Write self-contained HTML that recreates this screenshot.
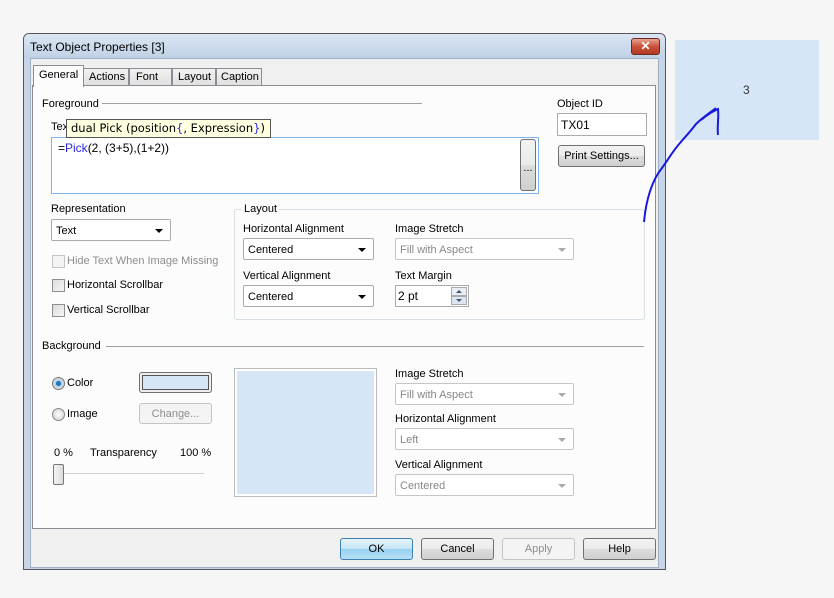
<!DOCTYPE html>
<html><head><style>
*{margin:0;padding:0;box-sizing:border-box}
body{width:834px;height:598px;background:#f6f6f6;font-family:"Liberation Sans",sans-serif;font-size:11px;color:#000;position:relative;overflow:hidden}
.a{position:absolute}
.t{position:absolute;white-space:nowrap}
.combo{position:absolute;background:#fff;border:1px solid #ababab;border-radius:2px;padding:5px 0 0 4px;height:22px}
.combo:after{content:"";position:absolute;right:7px;top:9px;border-left:4px solid transparent;border-right:4px solid transparent;border-top:4px solid #000}
.dis{color:#888;border-color:#c6c6c6}
.dis:after{border-top-color:#aaa}
.btn{position:absolute;border:1px solid #707070;border-radius:3px;background:linear-gradient(#f2f2f2,#ebebeb 50%,#dddddd 51%,#cfcfcf);text-align:center;height:21px;padding-top:4px}
.chk{position:absolute;width:13px;height:13px;border:1px solid #8e8f8f;background:linear-gradient(135deg,#dcdcdc,#f5f5f5)}
.line{position:absolute;height:1px;background:#a0a0a0}
</style></head><body>
<div class="a" style="left:23px;top:33px;width:643px;height:537px;background:#c6d6e8;border:1px solid #555;border-radius:6px 6px 0 0"></div>
<div class="a" style="left:24px;top:34px;width:641px;height:24px;background:linear-gradient(#dbe6f3,#c0d2e6);border-radius:5px 5px 0 0"></div>
<div class="t" style="left:30px;top:40px;font-size:12px">Text Object Properties [3]</div>
<div class="a" style="left:631px;top:38px;width:29px;height:17px;border:1px solid #6a2a20;border-radius:3px;background:linear-gradient(#e8a593,#c8513a 50%,#b13a24);color:#fff;font-weight:bold;text-align:center;font-size:12px;line-height:15px">✕</div>
<div class="a" style="left:30px;top:58px;width:629px;height:510px;background:#f0f0f0;border:1px solid #a0b0c4"></div>
<div class="a" style="left:32px;top:85px;width:624px;height:444px;background:#fcfcfc;border:1px solid #898c95"></div>
<div class="a" style="left:83px;top:68px;width:46px;height:18px;border:1px solid #898c95;background:linear-gradient(#f2f2f2,#e0e0e0)"></div>
<div class="a" style="left:129px;top:68px;width:43px;height:18px;border:1px solid #898c95;background:linear-gradient(#f2f2f2,#e0e0e0)"></div>
<div class="a" style="left:172px;top:68px;width:44px;height:18px;border:1px solid #898c95;background:linear-gradient(#f2f2f2,#e0e0e0)"></div>
<div class="a" style="left:216px;top:68px;width:46px;height:18px;border:1px solid #898c95;background:linear-gradient(#f2f2f2,#e0e0e0)"></div>
<div class="a" style="left:33px;top:65px;width:51px;height:22px;border:1px solid #898c95;border-bottom:none;background:#fcfcfc"></div>
<div class="t" style="left:39px;top:69px">General</div>
<div class="t" style="left:89px;top:71px">Actions</div>
<div class="t" style="left:136px;top:71px">Font</div>
<div class="t" style="left:178px;top:71px">Layout</div>
<div class="t" style="left:221px;top:71px">Caption</div>
<div class="t" style="left:42px;top:98px">Foreground</div>
<div class="line" style="left:102px;top:103px;width:320px"></div>
<div class="t" style="left:51px;top:121px">Text</div>
<div class="a" style="left:51px;top:137px;width:488px;height:57px;background:#fff;border:1px solid #7eb4ea"></div>
<div class="t" style="left:58px;top:141px;font-size:12px">=<span style="color:#2a2ae0">Pick</span>(2, (3+5),(1+2))</div>
<div class="a" style="left:66px;top:119px;width:205px;height:19px;background:#ffffe1;border:1px solid #555"></div>
<div class="t" style="left:71px;top:121px;font-family:'DejaVu Sans',sans-serif;font-size:11.5px">dual Pick (position<span style="color:#2a2ae0">{</span>, Expression<span style="color:#2a2ae0">}</span>)</div>
<div class="btn" style="left:520px;top:139px;width:16px;height:52px;padding-top:22px">...</div>
<div class="t" style="left:557px;top:98px">Object ID</div>
<div class="a" style="left:557px;top:113px;width:90px;height:23px;background:#fff;border:1px solid #ababab;padding:4px 0 0 3px;font-size:12px">TX01</div>
<div class="btn" style="left:558px;top:145px;width:87px;height:22px">Print Settings...</div>
<div class="t" style="left:51px;top:203px">Representation</div>
<div class="combo" style="left:51px;top:219px;width:120px">Text</div>
<div class="chk" style="left:52px;top:255px;border-color:#c5c5c5;background:#f4f4f4"></div>
<div class="t" style="left:67px;top:255px;color:#8d8d8d">Hide Text When Image Missing</div>
<div class="chk" style="left:52px;top:279px"></div>
<div class="t" style="left:67px;top:279px">Horizontal Scrollbar</div>
<div class="chk" style="left:52px;top:304px"></div>
<div class="t" style="left:67px;top:304px">Vertical Scrollbar</div>
<div class="a" style="left:234px;top:209px;width:411px;height:111px;border:1px solid #d5dfe5;border-radius:3px"></div>
<div class="t" style="left:242px;top:203px;background:#fcfcfc;padding:0 2px">Layout</div>
<div class="t" style="left:243px;top:223px">Horizontal Alignment</div>
<div class="combo" style="left:243px;top:238px;width:131px">Centered</div>
<div class="t" style="left:395px;top:223px">Image Stretch</div>
<div class="combo dis" style="left:395px;top:238px;width:179px">Fill with Aspect</div>
<div class="t" style="left:243px;top:270px">Vertical Alignment</div>
<div class="combo" style="left:243px;top:285px;width:131px">Centered</div>
<div class="t" style="left:395px;top:270px">Text Margin</div>
<div class="a" style="left:395px;top:285px;width:74px;height:22px;background:#fff;border:1px solid #ababab;padding:3px 0 0 2px;font-size:12px">2 pt</div>
<div class="a" style="left:451px;top:287px;width:16px;height:9px;border:1px solid #aaa;background:#e8eef5"><div style="margin:2px auto 0;width:0;border-left:3px solid transparent;border-right:3px solid transparent;border-bottom:3px solid #456"></div></div>
<div class="a" style="left:451px;top:296px;width:16px;height:9px;border:1px solid #aaa;background:#dde6f0"><div style="margin:2px auto 0;width:0;border-left:3px solid transparent;border-right:3px solid transparent;border-top:3px solid #456"></div></div>
<div class="t" style="left:42px;top:340px">Background</div>
<div class="line" style="left:106px;top:346px;width:538px"></div>
<div class="a" style="left:52px;top:377px;width:13px;height:13px;border-radius:50%;border:1px solid #777;background:radial-gradient(#1d78c4 30%,#bcd 35%,#eee)"></div>
<div class="t" style="left:67px;top:377px">Color</div>
<div class="a" style="left:139px;top:372px;width:73px;height:21px;border:1px solid #707070;border-radius:3px;background:#eee;padding:2px"><div style="width:100%;height:100%;background:#d6e6f6;border:1px solid #555"></div></div>
<div class="a" style="left:52px;top:408px;width:13px;height:13px;border-radius:50%;border:1px solid #8a8a8a;background:radial-gradient(#fff,#ccc)"></div>
<div class="t" style="left:67px;top:408px">Image</div>
<div class="a" style="left:139px;top:403px;width:73px;height:21px;border:1px solid #c4c4c4;border-radius:3px;background:#f4f4f4;color:#8d8d8d;text-align:center;padding-top:4px">Change...</div>
<div class="t" style="left:54px;top:447px">0 %</div>
<div class="t" style="left:90px;top:447px">Transparency</div>
<div class="t" style="left:180px;top:447px">100 %</div>
<div class="a" style="left:58px;top:473px;width:146px;height:2px;background:#d0d0d0;border-bottom:1px solid #fff"></div>
<div class="a" style="left:53px;top:464px;width:11px;height:21px;border:1px solid #777;border-radius:2px;background:linear-gradient(90deg,#f4f4f4,#dcdcdc)"></div>
<div class="a" style="left:234px;top:368px;width:143px;height:129px;border:1px solid #bbb;background:#fff;padding:2px"><div style="width:100%;height:100%;background:#d6e6f6"></div></div>
<div class="t" style="left:395px;top:368px">Image Stretch</div>
<div class="combo dis" style="left:395px;top:383px;width:179px">Fill with Aspect</div>
<div class="t" style="left:395px;top:413px">Horizontal Alignment</div>
<div class="combo dis" style="left:395px;top:428px;width:179px">Left</div>
<div class="t" style="left:395px;top:459px">Vertical Alignment</div>
<div class="combo dis" style="left:395px;top:474px;width:179px">Centered</div>
<div class="btn" style="left:340px;top:538px;width:73px;height:22px;border-color:#3c7fb1;background:linear-gradient(#e5f4fc,#c4e5f6 50%,#98d1ef 51%,#b7e0f5)">OK</div>
<div class="btn" style="left:421px;top:538px;width:73px;height:22px">Cancel</div>
<div class="a" style="left:502px;top:538px;width:73px;height:22px;border:1px solid #c4c4c4;border-radius:3px;background:#f4f4f4;color:#8d8d8d;text-align:center;padding-top:4px">Apply</div>
<div class="btn" style="left:583px;top:538px;width:73px;height:22px">Help</div>
<div class="a" style="left:675px;top:40px;width:144px;height:100px;background:#d6e6f6"></div>
<div class="t" style="left:743px;top:83px;font-size:12px;color:#333">3</div>
<svg class="a" style="left:0;top:0" width="834" height="598"><path d="M644 222 C646 200 652 180 662 168 C668 160 672 152 680 143 C686 136 690 132 696 124 C702 118 708 114 716 108 M701 120 C708 114 712 112 718 109 C719 118 717 126 718 135" fill="none" stroke="#1818e0" stroke-width="2"/></svg>
</body></html>
